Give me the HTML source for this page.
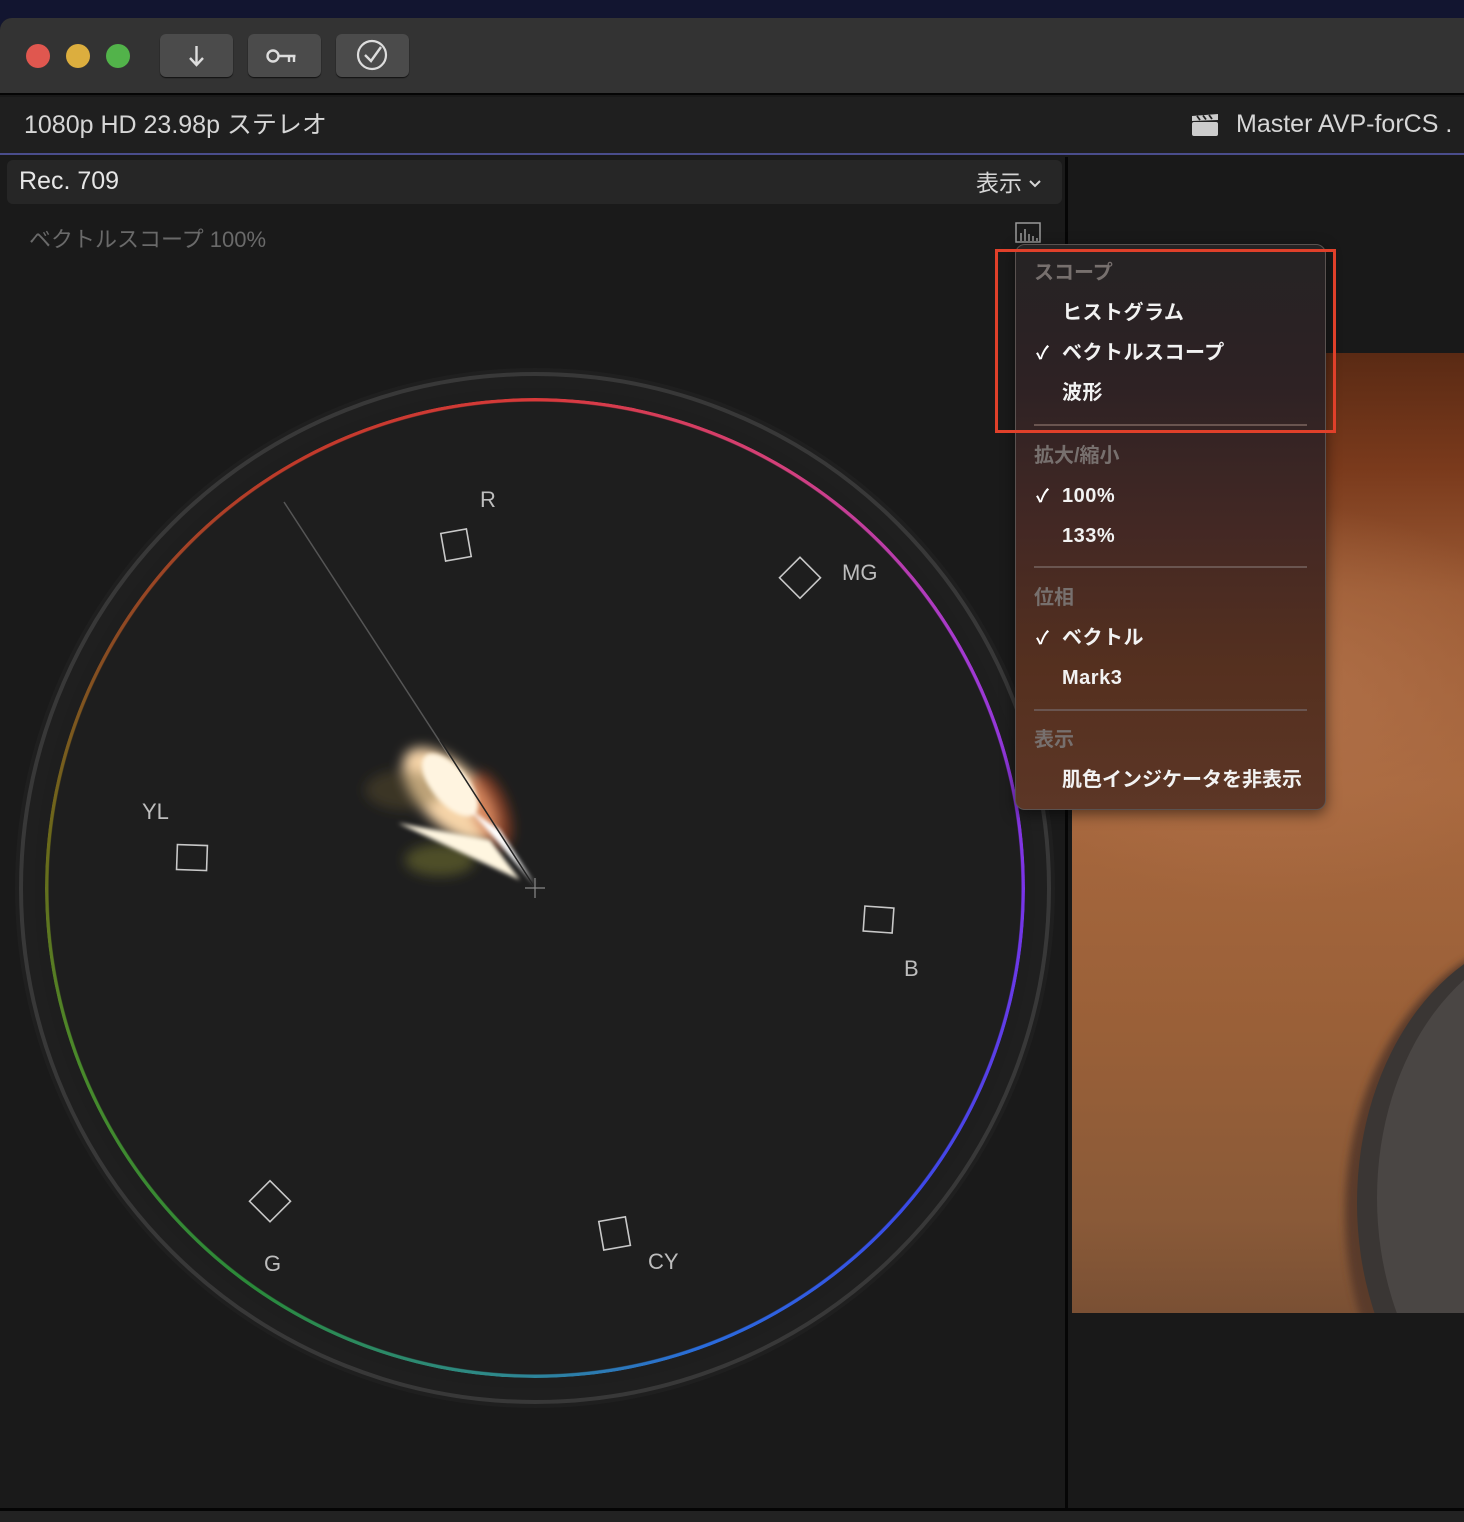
<!DOCTYPE html>
<html><head><meta charset="utf-8">
<style>
*{margin:0;padding:0;box-sizing:border-box}
body{width:1464px;height:1522px;background:#121530;position:relative;overflow:hidden;font-family:"Liberation Sans","Noto Sans CJK JP",sans-serif}
.abs{position:absolute}
#win{left:0;top:18px;width:1464px;height:1504px;background:#191919;border-top-left-radius:12px;overflow:hidden}
#title{left:0;top:0;width:1464px;height:77px;background:#333333;border-bottom:2px solid #050505}
.tl{width:24px;height:24px;border-radius:50%;top:26px}
.btn{top:16px;width:73px;height:43px;background:#4b4b4b;border-radius:6px;box-shadow:0 1px 1px #111}
#info{left:0;top:79px;width:1464px;height:58px;background:#1f1f1f;border-bottom:2px solid #4a4d8c}
#left{left:0;top:139px;width:1068px;height:1351px;background:#1a1a1a;border-right:3px solid #060606}
#hdr{left:7px;top:3px;width:1055px;height:44px;background:#262626;border-radius:6px}
#img{left:1072px;top:335px;width:392px;height:960px;overflow:hidden;background:
radial-gradient(ellipse 300px 200px at 200px 350px,#b07048 0%,rgba(176,112,72,0) 100%),
linear-gradient(180deg,#5a2a14 0%,#7a3a1c 12%,#9b5a34 25%,#a8683e 45%,#9a6038 70%,#8a5a38 90%,#7a5034 100%)}
#menu{left:1015px;top:226px;width:311px;height:566px;border-radius:10px;border:1px solid #5a5250;background:linear-gradient(180deg,#252324 0%,#2e2224 25%,#432824 50%,#55301f 75%,#5c3626 100%);box-shadow:0 4px 14px rgba(0,0,0,.5)}
.mi{position:absolute;left:46px;font-size:20px;line-height:24px;color:#f2f2f2;font-weight:bold;letter-spacing:0.5px}
.mh{position:absolute;left:18px;font-size:20px;line-height:24px;color:#77706e;font-weight:bold}
.ck{position:absolute;left:20px;font-size:18px;line-height:24px;color:#fff;font-weight:bold}
.sep{position:absolute;left:18px;width:273px;height:2px;background:#6a5550}
.lbl{position:absolute;font-size:22px;color:#bdbdbd}
</style></head><body>
<div id="win" class="abs">
 <div id="title" class="abs">
  <div class="abs tl" style="left:26px;background:#e0574f"></div>
  <div class="abs tl" style="left:66px;background:#dcae3e"></div>
  <div class="abs tl" style="left:106px;background:#52b34a"></div>
  <div class="abs btn" style="left:160px"><svg width="73" height="43"><path d="M36.5 12v18M30 24l6.5 7 6.5-7" stroke="#ddd" stroke-width="2.4" fill="none"/></svg></div>
  <div class="abs btn" style="left:248px"><svg width="73" height="43"><circle cx="25" cy="22" r="5.5" stroke="#ddd" stroke-width="2.4" fill="none"/><path d="M30.5 22h17M41 22v6M46 22v6" stroke="#ddd" stroke-width="2.4" fill="none"/></svg></div>
  <div class="abs btn" style="left:336px"><svg width="73" height="43"><circle cx="36" cy="21" r="14" stroke="#ddd" stroke-width="2.2" fill="none"/><path d="M29 21l6 6 10-14" stroke="#ddd" stroke-width="2.4" fill="none"/></svg></div>
 </div>
 <div id="info" class="abs">
  <div class="abs" style="left:24px;top:8px;font-size:25px;color:#d6d6d6">1080p HD 23.98p ステレオ</div>
  <svg class="abs" style="left:1191px;top:16px" width="28" height="24"><rect x="1" y="9" width="26" height="14" rx="2" fill="#ccc"/><path d="M1 3l26-2v6l-26 1z" fill="#ccc"/><path d="M6 3l3 4M12 2.5l3 4M18 2l3 4" stroke="#1f1f1f" stroke-width="1.8"/></svg>
  <div class="abs" style="left:1236px;top:13px;font-size:25px;color:#d6d6d6;white-space:nowrap">Master AVP-forCS .</div>
 </div>
 <div id="left" class="abs">
  <div id="hdr" class="abs">
   <div class="abs" style="left:12px;top:7px;font-size:25px;color:#e6e6e6">Rec. 709</div>
   <div class="abs" style="left:969px;top:4px;font-size:23px;color:#d6d6d6">表示 <svg width="14" height="10" style="vertical-align:2px"><path d="M2 2l5 5 5-5" stroke="#d6d6d6" stroke-width="2" fill="none"/></svg></div>
  </div>
  <div class="abs" style="left:29px;top:65px;font-size:22px;color:#6a6a6a">ベクトルスコープ 100%</div>
  <svg class="abs" style="left:1015px;top:65px" width="28" height="22"><rect x="1" y="1" width="24" height="19" fill="none" stroke="#9a9a9a" stroke-width="1.5"/><path d="M6 19v-8M10 19v-12M14 19v-7M18 19v-5M22 19v-3" stroke="#9a9a9a" stroke-width="1.5"/></svg>
  <svg class="abs" style="left:0;top:-157px" width="1068" height="1500">
   <defs>
    <filter id="bl"><feGaussianBlur stdDeviation="6"/></filter>
    <filter id="bl2"><feGaussianBlur stdDeviation="2"/></filter>
   </defs>
   <circle cx="535" cy="888" r="520" fill="#1f1f1f"/>
   <circle cx="535" cy="888" r="514" fill="none" stroke="#383838" stroke-width="4"/>
   <circle cx="535" cy="888" r="500" fill="#1e1e1e"/>
   <foreignObject x="45" y="398" width="980" height="980">
    <div xmlns="http://www.w3.org/1999/xhtml" style="width:980px;height:980px;border-radius:50%;background:conic-gradient(from 0deg,#d83a3a 0deg,#d4407a 30deg,#a63ad0 60deg,#7a34e8 90deg,#3a4ae8 130deg,#2a6cdc 160deg,#2e8a8a 185deg,#2a8a3a 215deg,#4a8a2a 250deg,#6a6a1a 275deg,#8a4a22 300deg,#c03a2a 330deg,#d83a3a 360deg);-webkit-mask:radial-gradient(circle,transparent 486px,#000 487px,#000 490px,transparent 491px);mask:radial-gradient(circle,transparent 486px,#000 487px,#000 490px,transparent 491px)"></div>
   </foreignObject>
   <line x1="284" y1="502" x2="535" y2="888" stroke="#555" stroke-width="1.5"/>
   <g filter="url(#bl)">
    <ellipse cx="450" cy="795" rx="60" ry="30" transform="rotate(45 450 795)" fill="#f6d4a8"/>
    <ellipse cx="490" cy="810" rx="18" ry="40" transform="rotate(-20 490 810)" fill="#c0502a" opacity=".6"/>
    <ellipse cx="440" cy="860" rx="35" ry="16" fill="#8a8a30" opacity=".45"/>
    <ellipse cx="405" cy="790" rx="40" ry="20" fill="#6a5a30" opacity=".4"/>
   </g>
   <g filter="url(#bl2)">
    <ellipse cx="450" cy="785" rx="38" ry="18" transform="rotate(50 450 785)" fill="#fff4e0"/>
    <path d="M398 823 L520 880 L490 840 Z" fill="#fff6e0"/>
    <path d="M470 810 L535 885 L500 830 Z" fill="#ffffff"/>
   </g>
   <line x1="440" y1="740" x2="535" y2="888" stroke="#222" stroke-width="1.5"/>
   <path d="M525 888h20M535 878v20" stroke="#888" stroke-width="1.2"/>
   <g fill="none" stroke="#c8c8c8" stroke-width="1.6">
    <rect x="443" y="531" width="26" height="28" transform="rotate(-10 456 545)"/>
    <rect x="786" y="563" width="29" height="29" transform="rotate(45 800 577)"/>
    <rect x="177" y="845" width="30" height="25" transform="rotate(2 191 857)"/>
    <rect x="864" y="907" width="29" height="25" transform="rotate(4 878 920)"/>
    <rect x="255" y="1187" width="29" height="29" transform="rotate(45 270 1202)"/>
    <rect x="601" y="1219" width="27" height="29" transform="rotate(-10 614 1233)"/>
   </g>
  </svg>
  <div class="lbl" style="left:480px;top:330px">R</div>
  <div class="lbl" style="left:842px;top:403px">MG</div>
  <div class="lbl" style="left:142px;top:642px">YL</div>
  <div class="lbl" style="left:904px;top:799px">B</div>
  <div class="lbl" style="left:264px;top:1094px">G</div>
  <div class="lbl" style="left:648px;top:1092px">CY</div>
 </div>
 <div id="img" class="abs">
  <svg class="abs" style="left:0;top:0" width="392" height="960">
   <defs><filter id="b3"><feGaussianBlur stdDeviation="4"/></filter></defs>
   <ellipse cx="485" cy="860" rx="212" ry="280" fill="#5a3a2a" filter="url(#b3)"/>
   <ellipse cx="490" cy="850" rx="205" ry="272" fill="#3a3634"/>
   <ellipse cx="500" cy="845" rx="195" ry="262" fill="#4a4644"/>
  </svg>
 </div>
 <div class="abs" style="left:0;top:1490px;width:1464px;height:3px;background:#050505"></div>
 <div class="abs" style="left:0;top:1493px;width:1464px;height:20px;background:#222"></div>
</div>
<div id="menu" class="abs" style="top:244px">
 <div class="mh" style="top:16px">スコープ</div>
 <div class="mi" style="top:56px">ヒストグラム</div>
 <div class="ck" style="top:96px">✓</div><div class="mi" style="top:96px">ベクトルスコープ</div>
 <div class="mi" style="top:136px">波形</div>
 <div class="sep" style="top:179px"></div>
 <div class="mh" style="top:199px">拡大/縮小</div>
 <div class="ck" style="top:239px">✓</div><div class="mi" style="top:239px">100%</div>
 <div class="mi" style="top:279px">133%</div>
 <div class="sep" style="top:321px"></div>
 <div class="mh" style="top:341px">位相</div>
 <div class="ck" style="top:381px">✓</div><div class="mi" style="top:381px">ベクトル</div>
 <div class="mi" style="top:421px">Mark3</div>
 <div class="sep" style="top:464px"></div>
 <div class="mh" style="top:483px">表示</div>
 <div class="mi" style="top:523px;letter-spacing:0">肌色インジケータを非表示</div>
</div>
<div class="abs" style="left:995px;top:249px;width:341px;height:184px;border:3px solid #e0402a"></div>
</body></html>
